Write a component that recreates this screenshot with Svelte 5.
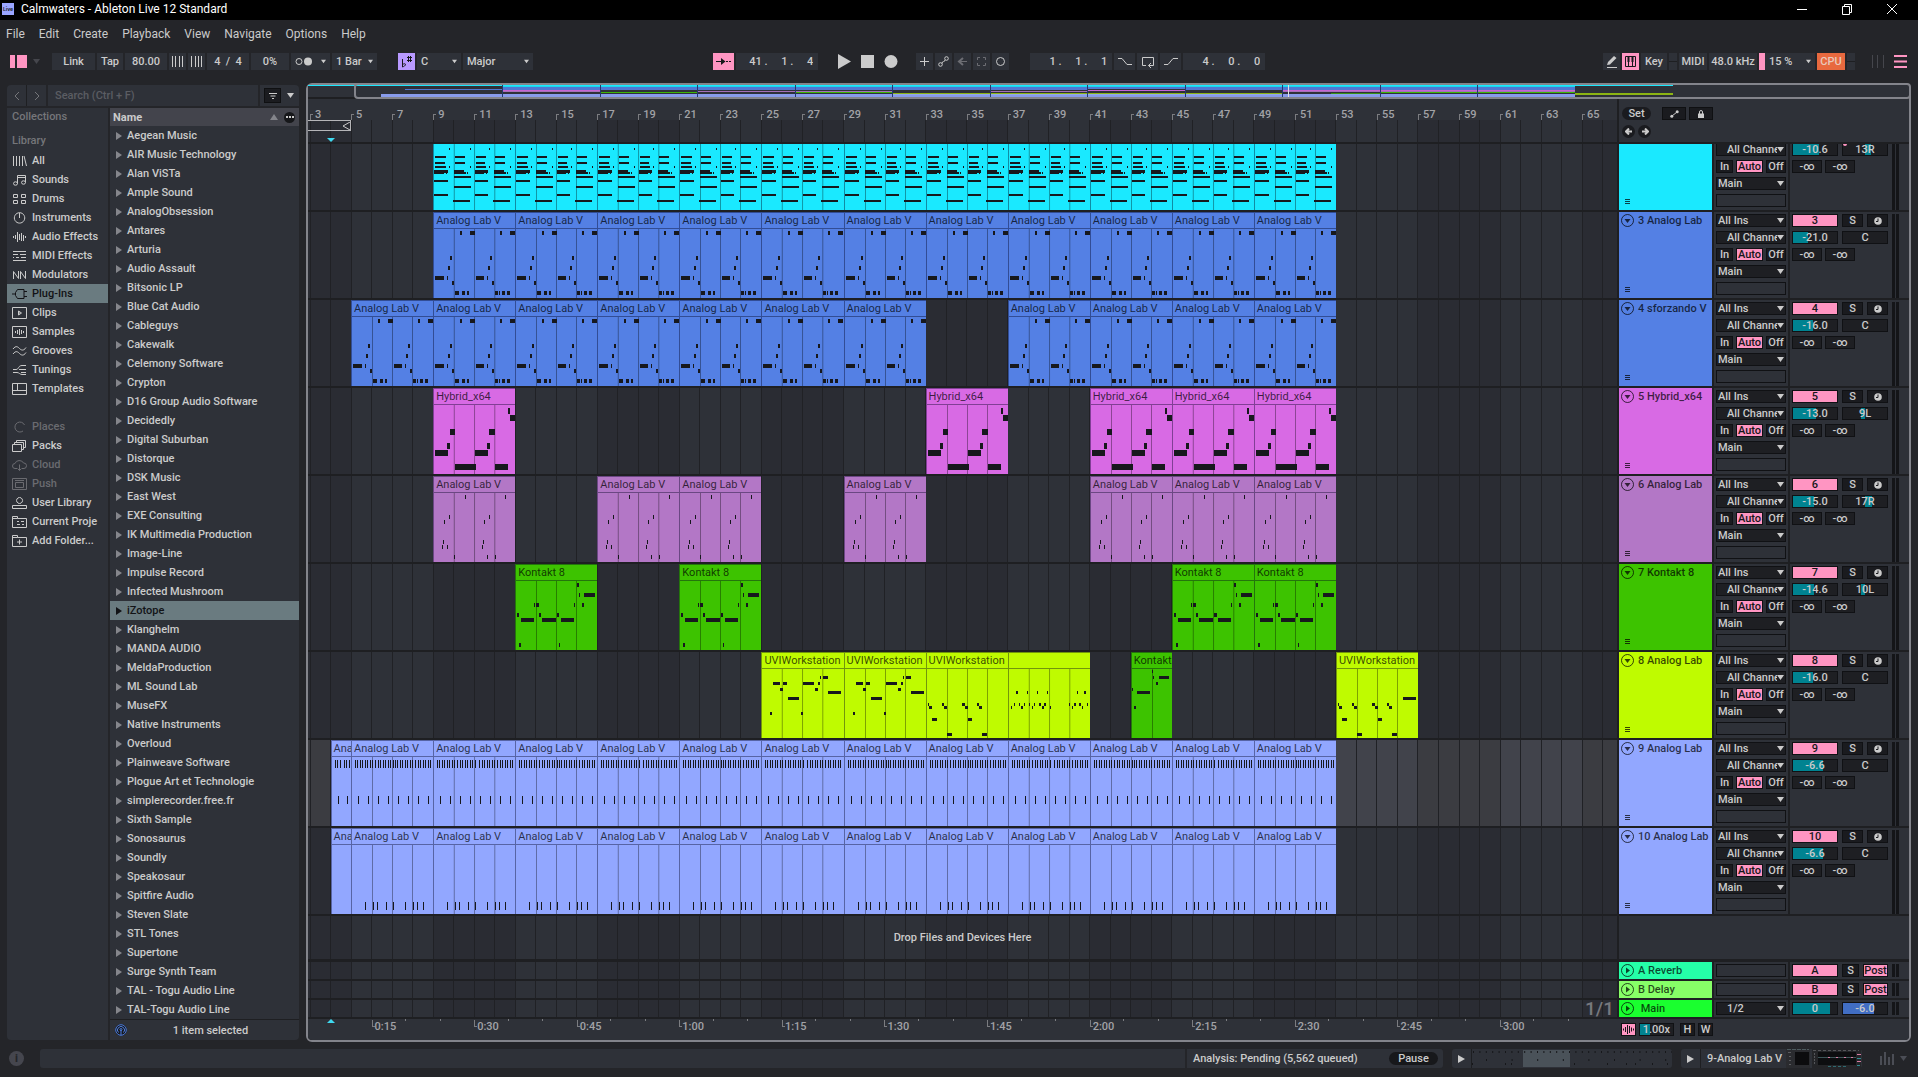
<script lang="ts">
	type Note = [x: number, y: number, w: number];
	type Pattern = { h: number; notes: Note[] };
	type Clip = { at: number; bars: number; name: string; pattern: string; color?: string };

	const FIRST_BAR = 2.9;
	const LAST_BAR = 66.7;
	const SPAN = LAST_BAR - FIRST_BAR;

	const menus = ['File', 'Edit', 'Create', 'Playback', 'View', 'Navigate', 'Options', 'Help'];

	const library = [
		{ label: 'All', icon: 'M1.5 1v10M4.5 1v10M7.5 1v10M10.5 1v10M12 1l2.5 10' },
		{ label: 'Sounds', icon: 'M5.5 9.5v-8h8v7M5.5 3.5h8M5.5 9.5a2 1.7 0 1 1-4 0a2 1.7 0 1 1 4 0M13.5 8.5a2 1.7 0 1 1-4 0a2 1.7 0 1 1 4 0' },
		{ label: 'Drums', icon: 'M1.5 1.5h4v3h-4zM9.5 1.5h4v3h-4zM1.5 7.5h4v3h-4zM9.5 7.5h4v3h-4z' },
		{ label: 'Instruments', icon: 'M7.5 .7v5.3M7.5 .7a5.2 5.2 0 1 0 .1 0' },
		{ label: 'Audio Effects', icon: 'M1.5 5v2M3.5 4v4M5.5 1v10M7.5 3v6M9.5 2v8M11.5 4v6M13.5 5v2' },
		{ label: 'MIDI Effects', icon: 'M1 1.5h13M1 10.5h13M1 4.5h5M8 4.5h6M4 7.5h3M9 7.5h5M1 7.5h1' },
		{ label: 'Modulators', icon: 'M1.5 10V2.5L6.5 9.5V2M8.5 10V2.5L13.5 9.5V2' },
		{ label: 'Plug-Ins', icon: 'M0 6h3.5M12 3.5h3M12 8.5h3M3.5 4.5l2-3h6.5v9h-6.5l-2-3z' },
		{ label: 'Clips', icon: 'M.5 .5h14v11h-14zM6.5 4v4l3-2zM7 5v2' },
		{ label: 'Samples', icon: 'M.5 .5h14v11h-14zM3.5 5v2M5.5 4v4M7.5 3v6M9.5 4v4M11.5 5v2' },
		{ label: 'Grooves', icon: 'M1 4c3-4 5-2 6.5-.5s4 3 6.5-1M1 9c3-4 5-2 6.5-.5s4 3 6.5-1' },
		{ label: 'Tunings', icon: 'M1 5.5h3c3 0 2-4 6-4h4M7 5.5h7M1 8.5h4c2 0 3 2 5 2h4M9 8.5h5' },
		{ label: 'Templates', icon: 'M.5 .5h14v11h-14zM.5 7.5h14M5.5 .5v7' }
	];

	const places = [
		{ label: 'Places', icon: 'M12.5 4a5 5 0 1 0-1.5 6', dim: true },
		{ label: 'Packs', icon: 'M.5 4.5h9v7h-9zM2.5 4.5v-2h9v7h-2M4.5 2.5v-2h9v7h-2' },
		{ label: 'Cloud', icon: 'M5 9.5h-2a2.5 2.5 0 0 1 0-5a4.5 4 0 0 1 8.5-.5a2.7 2.7 0 0 1 .5 5.5h-2M7.5 5.5v6M5.5 9.5l2 2l2-2', dim: true },
		{ label: 'Push', icon: 'M.5 .5h14v11h-14zM3.5 4.5h8v5h-8zM3 2.5h9', dim: true },
		{ label: 'User Library', icon: 'M7.5 .5a3 3 0 1 0 .1 0M.5 11.5v-3h14v3z' },
		{ label: 'Current Proje', icon: 'M.5 11.5v-11h5v2h9v9zM.5 2.5h5M5 5.5h2M9 5.5h3M5 8.5h3M10 8.5h2' },
		{ label: 'Add Folder...', icon: 'M.5 11.5v-11h5v2h9v9zM.5 2.5h5M7.5 4.5v5M5 7h5' }
	];

	const vendors = [
		'Aegean Music', 'AIR Music Technology', 'Alan ViSTa', 'Ample Sound', 'AnalogObsession',
		'Antares', 'Arturia', 'Audio Assault', 'Bitsonic LP', 'Blue Cat Audio', 'Cableguys',
		'Cakewalk', 'Celemony Software', 'Crypton', 'D16 Group Audio Software', 'Decidedly',
		'Digital Suburban', 'Distorque', 'DSK Music', 'East West', 'EXE Consulting',
		'IK Multimedia Production', 'Image-Line', 'Impulse Record', 'Infected Mushroom', 'iZotope',
		'Klanghelm', 'MANDA AUDIO', 'MeldaProduction', 'ML Sound Lab', 'MuseFX',
		'Native Instruments', 'Overloud', 'Plainweave Software', 'Plogue Art et Technologie',
		'simplerecorder.free.fr', 'Sixth Sample', 'Sonosaurus', 'Soundly', 'Speakosaur',
		'Spitfire Audio', 'Steven Slate', 'STL Tones', 'Supertone', 'Surge Synth Team',
		'TAL - Togu Audio Line', 'TAL-Togu Audio Line'
	];

	// Every pattern is drawn over four bars, 82 units wide
	const twice = (notes: Note[]): Note[] => [...notes, ...notes.map(([x, y, w]): Note => [x + 41, y, w])];

	const patterns: Record<string, Pattern> = {
		chords: {
			h: 2,
			notes: twice([
				[15, 4, 1], [1, 12, 11], [1, 18, 10], [1, 22, 11], [15, 22, 1], [0, 26, 14], [0, 27, 14],
				[0, 28, 10], [12, 28, 1], [0, 36, 14], [0, 50, 14],
				[36, 4, 1], [21, 12, 10], [21, 18, 10], [36, 22, 1], [20, 26, 10], [20, 28, 12], [33, 28, 1],
				[20, 32, 17], [20, 42, 17], [19, 56, 17]
			])
		},
		arp: {
			h: 4,
			notes: [
				...twice([[1, 47, 9], [13, 47, 1], [14, 37, 2], [16, 27, 2], [18, 52, 2], [26, 2, 2], [36, 2, 5]]),
				[21, 62, 4], [28, 62, 3], [33, 62, 2], [62, 62, 3], [66, 62, 1], [69, 62, 3], [74, 62, 3]
			]
		},
		hybrid: {
			h: 6,
			notes: [
				[75, 3, 2], [77, 10, 5], [16, 24, 5], [56, 24, 6], [13, 38, 3], [54, 38, 3], [1, 45, 13],
				[41, 45, 14], [21, 59, 21], [62, 59, 13]
			]
		},
		plucks: {
			h: 4,
			notes: [
				[31, 2, 1], [72, 2, 1], [15, 22, 1], [56, 22, 1], [10, 27, 1], [51, 27, 1], [9, 47, 1],
				[50, 47, 1], [8, 52, 1], [13, 52, 1], [49, 52, 1], [20, 62, 1], [54, 62, 1], [62, 62, 1]
			]
		},
		kontakt: {
			h: 4,
			notes: [
				[62, 2, 2], [64, 12, 1], [69, 12, 11], [18, 22, 1], [20, 22, 3], [59, 22, 1], [67, 22, 2],
				[1, 32, 2], [23, 32, 2], [41, 32, 3], [5, 37, 13], [26, 37, 14], [46, 37, 13], [3, 62, 2], [44, 62, 1]
			]
		},
		kontaktShort: {
			h: 3,
			notes: [[20, 1, 2], [22, 7, 1], [28, 7, 10], [25, 13, 2], [0, 19, 1], [5, 22, 13], [2, 37, 2]]
		},
		uviLead: {
			h: 3,
			notes: [
				[59, 7, 1], [62, 7, 5], [11, 13, 7], [21, 13, 4], [41, 13, 12], [57, 13, 2], [18, 19, 3],
				[54, 19, 3], [26, 28, 11], [67, 22, 13], [8, 43, 2], [39, 43, 2]
			]
		},
		uviBass: {
			h: 3,
			notes: [
				[1, 34, 1], [15, 34, 2], [35, 34, 3], [51, 34, 2], [2, 37, 3], [17, 37, 3], [38, 37, 3],
				[53, 37, 3], [5, 49, 5], [41, 49, 5], [20, 64, 5], [56, 64, 5]
			]
		},
		uviRun: {
			h: 3,
			notes: [
				[7, 22, 2], [18, 22, 1], [28, 22, 1], [38, 22, 1], [69, 22, 1], [76, 22, 2], [5, 34, 1],
				[10, 34, 1], [15, 34, 1], [20, 34, 1], [25, 34, 1], [30, 34, 2], [35, 34, 2], [61, 34, 1],
				[66, 34, 2], [71, 34, 2], [79, 34, 1], [2, 37, 1], [12, 37, 2], [23, 37, 1], [33, 37, 2],
				[41, 37, 1], [64, 37, 1], [74, 37, 1]
			]
		},
		hats: {
			h: 8,
			notes: [
				...Array.from({ length: 31 }, (_, i): Note => [Math.round((i + 1) * 2.56), 3, 1]),
				...[6, 16, 26, 36, 47, 57, 67, 77].map((x): Note => [x, 39, 1])
			]
		},
		kicks: {
			h: 8,
			notes: [13, 21, 25, 34, 41, 54, 62, 66, 72].map((x): Note => [x, 57, 1])
		},
		empty: { h: 1, notes: [] }
	};
	patterns.uviEnd = { h: 3, notes: [...patterns.uviBass.notes, [67, 28, 13]] };

	const clips = (name: string, pattern: string, starts: number[]): Clip[] =>
		starts.map((at) => ({ at, bars: 4, name, pattern }));

	const fromNine = [9, 13, 17, 21, 25, 29, 33, 37, 41, 45, 49];

	// mapY / mapH: the stripe each track gets in the overview
	const tracks = [
		{
			num: 2, name: '', color: '#1ae9ff', vol: '-10.6', fill: 58, pan: '13R', panAt: 13, mapY: 1, mapH: 1,
			clips: clips('', 'chords', fromNine)
		},
		{
			num: 3, name: '3 Analog Lab', color: '#5480e4', vol: '-21.0', fill: 34, pan: 'C', panAt: 0, mapY: 2, mapH: 2,
			clips: clips('Analog Lab V', 'arp', fromNine)
		},
		{
			num: 4, name: '4 sforzando V', color: '#5480e4', vol: '-16.0', fill: 45, pan: 'C', panAt: 0, mapY: 4, mapH: 1,
			clips: clips('Analog Lab V', 'arp', [5, 9, 13, 17, 21, 25, 29, 37, 41, 45, 49])
		},
		{
			num: 5, name: '5 Hybrid_x64', color: '#d86ae4', vol: '-13.0', fill: 53, pan: '9L', panAt: -9, mapY: 5, mapH: 1,
			clips: clips('Hybrid_x64', 'hybrid', [9, 33, 41, 45, 49])
		},
		{
			num: 6, name: '6 Analog Lab', color: '#b377c6', vol: '-15.0', fill: 47, pan: '17R', panAt: 17, mapY: 6, mapH: 1,
			clips: clips('Analog Lab V', 'plucks', [9, 17, 21, 29, 41, 45, 49])
		},
		{
			num: 7, name: '7 Kontakt 8', color: '#3dc300', vol: '-14.6', fill: 48, pan: '10L', panAt: -10, mapY: 7, mapH: 1,
			clips: clips('Kontakt 8', 'kontakt', [13, 21, 45, 49])
		},
		{
			num: 8, name: '8 Analog Lab', color: '#bffb00', vol: '-16.0', fill: 45, pan: 'C', panAt: 0, mapY: 8, mapH: 2,
			clips: [
				...clips('UVIWorkstation', 'uviLead', [25, 29]),
				...clips('UVIWorkstation', 'uviBass', [33]),
				...clips('', 'uviRun', [37]),
				{ at: 43, bars: 2, name: 'Kontakt 8', pattern: 'kontaktShort', color: '#3dc300' },
				...clips('UVIWorkstation', 'uviEnd', [53])
			]
		},
		{
			num: 9, name: '9 Analog Lab', color: '#92a7ff', vol: '-6.6', fill: 68, pan: 'C', panAt: 0, mapY: 9, mapH: 1,
			clips: [
				{ at: 4, bars: 1, name: 'Analog Lab V', pattern: 'hats' },
				...clips('Analog Lab V', 'hats', [5, ...fromNine])
			]
		},
		{
			num: 10, name: '10 Analog Lab', color: '#92a7ff', vol: '-6.6', fill: 68, pan: 'C', panAt: 0, mapY: 10, mapH: 2,
			clips: [
				{ at: 4, bars: 1, name: 'Analog Lab V', pattern: 'empty' },
				...clips('Analog Lab V', 'kicks', [5, ...fromNine])
			]
		}
	];

	const returns = [
		{ key: 'A', name: 'A Reverb', color: '#25ffa8' },
		{ key: 'B', name: 'B Delay', color: '#87ff67' }
	];

	const bars = Array.from({ length: 64 }, (_, i) => i + 3);
	const oddBars = bars.filter((b) => b % 2 === 1);
	const lightBars = [5, 13, 21, 29, 37, 45, 53, 61];
	const times = Array.from({ length: 12 }, (_, i) => {
		const s = (i + 1) * 15;
		return `${Math.floor(s / 60)}:${String(s % 60).padStart(2, '0')}`;
	});

	let selectedPlace = $state('Plug-Ins');
	let selectedVendor = $state('iZotope');
	let selectedTrack = $state(9);
	let search = $state('');

	const clipColor = (clip: Clip, color: string) => clip.color ?? color;
</script>

{#snippet caret()}
	<svg class="caret" viewBox="0 0 7 5" width="7" height="5"><path d="M0 0h7l-3.5 5z" /></svg>
{/snippet}

{#snippet barGrid()}
	<svg class="bar-grid" viewBox="0 0 {SPAN} 1" preserveAspectRatio="none" shape-rendering="crispEdges">
		{#each lightBars as b}
			<rect class="light" x={b - FIRST_BAR} y="0" width="4" height="1" />
		{/each}
		{#each bars as b}
			<line x1={b - FIRST_BAR} x2={b - FIRST_BAR} y1="0" y2="1" />
		{/each}
	</svg>
{/snippet}

{#snippet dropdown(label: string, value: string, cls: string)}
	<span class="dropdown {cls}">
		<select aria-label={label}><option>{value}</option></select>
		{@render caret()}
	</span>
{/snippet}

{#snippet meter()}
	<span class="meter"><i></i><i></i></span>
{/snippet}

<div class="app">
	<header class="titlebar">
		<span class="app-icon">Live</span>
		<span class="title">Calmwaters - Ableton Live 12 Standard</span>
		<div class="window-buttons">
			<button aria-label="Minimize"><svg viewBox="0 0 12 12" width="12" height="12"><path d="M1 6.5h10" /></svg></button>
			<button aria-label="Restore"><svg viewBox="0 0 12 12" width="12" height="12"><path d="M1.5 3.5h7v8h-7zM3.5 3.5v-2h7v8h-2" /></svg></button>
			<button aria-label="Close"><svg viewBox="0 0 12 12" width="12" height="12"><path d="M1 1l10 10M11 1l-10 10" /></svg></button>
		</div>
	</header>

	<nav class="menubar">
		{#each menus as menu}
			<button>{menu}</button>
		{/each}
	</nav>

	<div class="toolbar">
		<button class="browser-toggle" aria-label="Toggle browser"><i></i><i></i></button>
		<button class="toggle-caret" aria-label="Browser options">{@render caret()}</button>

		<div class="group">
			<button class="w43">Link</button>
			<button class="w26">Tap</button>
			<input class="w42" aria-label="Tempo" value="80.00" />
			<button class="w17" aria-label="Nudge down"><svg viewBox="0 0 13 11" width="13" height="11"><path d="M1.5 0v11M4.5 0v11M8.5 0v11M11.5 0v11" /></svg></button>
			<button class="w17" aria-label="Nudge up"><svg viewBox="0 0 13 11" width="13" height="11"><path d="M1.5 0v11M5.5 0v11M8.5 0v11M11.5 0v11" /></svg></button>
			<input class="w42" aria-label="Time signature" value="4  /  4" />
			<input class="w38" aria-label="Groove amount" value="0%" />
			<button class="w39 metronome" aria-label="Metronome">
				<svg viewBox="0 0 18 9" width="18" height="9"><circle cx="4" cy="4.5" r="3" /><circle class="solid" cx="13" cy="4.5" r="4" /></svg>
				{@render caret()}
			</button>
			{@render dropdown('Quantization', '1 Bar', 'w45')}
		</div>

		<div class="group scale">
			<button class="w17 violet" aria-label="Scale mode"><svg viewBox="0 0 12 12" width="12" height="12"><path d="M1.5 3v8c1.5-.5 3-1.500 3-2.500s-1.500-1-3 0M7.500 0v6M9.500 0v6M6 1.500h5M6 4.500h5" /></svg></button>
			{@render dropdown('Root note', 'C', 'w44')}
			{@render dropdown('Scale name', 'Major', 'w70')}
		</div>

		<div class="space-a"></div>

		<div class="group">
			<button class="w21 pink" aria-label="Follow"><svg viewBox="0 0 16 9" width="16" height="9"><path d="M0 4.5h9M10 4.5h2M13 4.5h2" /><path class="solid" d="M5 1l4.5 3.5l-4.5 3.5z" /></svg></button>
			<input class="w82 position" aria-label="Song position" value="41 .     1 .     4" />
		</div>

		<div class="transport">
			<button aria-label="Play"><svg viewBox="0 0 14 15" width="14" height="15"><path class="solid" d="M0 0l13 7.5l-13 7.5z" /></svg></button>
			<button aria-label="Stop"><svg viewBox="0 0 14 13" width="14" height="13"><path class="solid" d="M0 0h13v13h-13z" /></svg></button>
			<button aria-label="Record"><svg viewBox="0 0 14 13" width="14" height="13"><circle class="solid" cx="7" cy="6.5" r="6.5" /></svg></button>
		</div>

		<div class="group">
			<button class="w17" aria-label="Overdub"><svg viewBox="0 0 11 11" width="11" height="11"><path d="M1 5.5h9M5.5 1v9" /></svg></button>
			<button class="w17" aria-label="Automation arm"><svg viewBox="0 0 11 11" width="11" height="11"><circle cx="2.5" cy="8.5" r="1.8" /><circle cx="8.5" cy="2.5" r="1.8" /><path d="M4 7.5c0-3 3-1 3-3.5" /></svg></button>
			<button class="w17 dim" aria-label="Re-enable automation"><svg viewBox="0 0 11 11" width="11" height="11"><path d="M2 5.5h8" /><path class="thick" d="M6 2l-4 3.5l4 3.5" /></svg></button>
			<button class="w17 dim" aria-label="Capture"><svg viewBox="0 0 11 11" width="11" height="11"><path d="M1.5 4v-2.5h2.5M7 1.5h2.5v2.5M9.5 7v2.5h-2.5M4 9.5h-2.5v-2.5" /></svg></button>
			<button class="w17" aria-label="Session record"><svg viewBox="0 0 11 11" width="11" height="11"><circle cx="5.5" cy="5.5" r="4" /></svg></button>
		</div>

		<div class="group loop-group">
			<input class="w82 position" aria-label="Loop start" value="1 .     1 .     1" />
			<button class="w21" aria-label="Punch in"><svg viewBox="0 0 14 9" width="14" height="9"><path d="M0 1.5h4l5 6h5" /></svg></button>
			<button class="w21" aria-label="Loop"><svg viewBox="0 0 14 12" width="14" height="12"><path d="M5 9.5h-3.5v-8h11v8h-5M10 7l-2.5 2.5l2.5 2.5" /></svg></button>
			<button class="w21" aria-label="Punch out"><svg viewBox="0 0 14 9" width="14" height="9"><path d="M0 7.5h4l5-6h5" /></svg></button>
			<input class="w82 position" aria-label="Loop length" value="4 .     0 .     0" />
		</div>

		<div class="space-b"></div>

		<div class="group">
			<button class="w17" aria-label="Draw mode"><svg viewBox="0 0 12 13" width="12" height="13"><path class="solid" d="M1 10l1-3l6-6l2.5 2l-6.5 6.5z" /><path d="M1 12.5h10" /></svg></button>
			<button class="w17 pink" aria-label="Computer keyboard"><svg viewBox="0 0 11 11" width="11" height="11"><path d="M.5 .5h10v10h-10zM3.5 6v5M7.5 6v5" /><path class="solid" d="M2.5 0h2v6h-2zM6.5 0h2v6h-2z" /></svg></button>
			<button class="w26">Key</button>
			<span class="w8 light-strip"></span>
			<button class="w28">MIDI</button>
			<button class="w48">48.0 kHz</button>
			{@render dropdown('CPU load', '15 %', 'w56 load')}
			<button class="w28 cpu">CPU</button>
			<span class="w8 light-strip"></span>
		</div>
		<div class="view-toggles">
			<button class="faint" aria-label="Session view"><svg viewBox="0 0 14 13" width="14" height="13"><path d="M1.5 0v13M6.5 0v13M12.5 0v13" /></svg></button>
			<button class="rose" aria-label="Arrangement view"><svg viewBox="0 0 13 13" width="13" height="13"><path class="thick" d="M0 1h13M0 6.5h13M0 12h13" /></svg></button>
		</div>
	</div>

	<main class="workspace">
		<aside class="browser">
			<div class="search-row">
				<div class="history">
					<button aria-label="Back"><svg viewBox="0 0 6 8" width="6" height="8"><path d="M5 0l-4 4l4 4" /></svg></button>
					<button aria-label="Forward"><svg viewBox="0 0 6 8" width="6" height="8"><path d="M1 0l4 4l-4 4" /></svg></button>
				</div>
				<input aria-label="Search" placeholder="Search (Ctrl + F)" bind:value={search} />
				<div class="filters">
					<button class="filter" aria-label="Filter"><svg viewBox="0 0 8 6" width="8" height="6"><path d="M0 .5h8M1.5 3h5M3 5.5h2" /></svg></button>
					<button aria-label="Filter options">{@render caret()}</button>
				</div>
			</div>

			<div class="columns">
				<div class="sidebar">
					<h2>Collections</h2>
					<h2 class="second">Library</h2>
					{#each library as item}
						<button class:selected={item.label === selectedPlace} onclick={() => (selectedPlace = item.label)}>
							<svg viewBox="0 0 15 12" width="15" height="12"><path d={item.icon} /></svg>{item.label}
						</button>
					{/each}
					<div class="blank"></div>
					{#each places as item}
						<button class:faded={item.dim} class:selected={item.label === selectedPlace} onclick={() => (selectedPlace = item.label)}>
							<svg viewBox="0 0 15 12" width="15" height="12"><path d={item.icon} /></svg>{item.label}
						</button>
					{/each}
				</div>

				<div class="results">
					<div class="results-head">
						<span>Name</span>
						<svg viewBox="0 0 8 6" width="8" height="6"><path class="solid" d="M0 6h8l-4-6z" /></svg>
						<button aria-label="Columns"><i></i><i></i><i></i></button>
					</div>
					<ul>
						{#each vendors as vendor}
							<li>
								<button class:selected={vendor === selectedVendor} onclick={() => (selectedVendor = vendor)}>
									<svg viewBox="0 0 6 8" width="6" height="8"><path d="M0 0v8l6-4z" /></svg>{vendor}
								</button>
							</li>
						{/each}
					</ul>
					<div class="results-foot">
						<button aria-label="Preview"><svg viewBox="0 0 12 12" width="12" height="12"><circle cx="6" cy="6" r="5.3" /><path d="M3.5 8.5a3.5 3.5 0 1 1 5 0M6 6v5" /><circle cx="6" cy="5.5" r="1" /></svg></button>
						<span>1 item selected</span>
					</div>
				</div>
			</div>
		</aside>

		<section class="arrangement">
			<div class="overview">
				<svg viewBox="0 0 {LAST_BAR - 1} 12" preserveAspectRatio="none" shape-rendering="crispEdges">
					<rect x="0" y="0" width="56" height="1" fill="#1ae9ff" />
					{#each tracks as track}
						{#each track.clips as clip}
							<rect x={clip.at - 1} y={track.mapY} width={clip.bars} height={track.mapH} fill={clipColor(clip, track.color)} opacity={track.num === 8 ? 0.65 : 0.9} />
						{/each}
					{/each}
					{#each fromNine as b}
						<line x1={b - 1} x2={b - 1} y1="0" y2="12" />
					{/each}
					<line class="playhead" x1="40.25" x2="40.25" y1="0" y2="12" />
				</svg>
				<div class="overview-window"></div>
			</div>

			<div class="row ruler-row">
				<div class="rulers">
					<div class="timeline beat-ruler">
						{#each oddBars as b}
							<span class="beat" style:grid-column="{b - 1} / span 2"><i></i>{b}</span>
						{/each}
					</div>
					<div class="timeline scrub">
						{@render barGrid()}
						<div class="loop-brace"><svg viewBox="0 0 8 8" width="8" height="8"><path d="M8 0l-7 4l7 4" /></svg></div>
						<svg class="locator" viewBox="0 0 8 4" width="8" height="4"><path d="M0 0h8l-4 4z" /></svg>
					</div>
				</div>
				<div class="set-controls">
					<div>
						<button class="set">Set</button>
						<button class="tool" aria-label="Automation mode"><svg viewBox="0 0 9 8" width="9" height="8"><path d="M2 6l5-4" /><circle class="solid" cx="1.8" cy="6.2" r="1.5" /><circle class="solid" cx="7.2" cy="1.8" r="1.5" /></svg></button>
						<button class="tool" aria-label="Lock envelopes"><svg viewBox="0 0 8 8" width="8" height="8"><path class="solid" d="M1 3.5h6v4.5h-6z" /><path d="M2.5 4v-2a1.5 1.5 0 0 1 3 0v2" /></svg></button>
					</div>
					<div>
						<button class="round" aria-label="Previous locator"><svg viewBox="0 0 8 7" width="8" height="7"><path class="thick" d="M1 3.5h6M4 .5l-3 3l3 3" /></svg></button>
						<button class="round" aria-label="Next locator"><svg viewBox="0 0 8 7" width="8" height="7"><path class="thick" d="M1 3.5h6M4 .5l3 3l-3 3" /></svg></button>
					</div>
				</div>
			</div>

			{#each tracks as track, index}
				<div class="row track" class:cut={index === 0} class:current={track.num === selectedTrack}>
					<div class="timeline lane">
						{@render barGrid()}
						{#each track.clips as clip}
							<div class="clip" style:grid-column="{clip.at - 1} / span {clip.bars}" style:background={clipColor(clip, track.color)}>
								<div class="clip-name">{clip.name}</div>
								<svg viewBox="0 0 {clip.bars * 20.5} 69" preserveAspectRatio="none" shape-rendering="crispEdges">
									{#each Array(clip.bars - 1) as _, i}
										<line x1={(i + 1) * 20.5} x2={(i + 1) * 20.5} y1="0" y2="69" />
									{/each}
									{#each patterns[clip.pattern].notes as [x, y, w]}
										<rect {x} y={index === 0 ? y + 3 : y} width={w} height={patterns[clip.pattern].h} />
									{/each}
								</svg>
							</div>
						{/each}
					</div>
					<div class="head" style:background={track.color}>
						<div class="head-top">
							<button aria-label="Unfold track"><svg viewBox="0 0 13 13" width="13" height="13"><circle cx="6.5" cy="6.5" r="6" /><path class="solid" d="M3.5 5h6l-3 4z" /></svg></button>
							<button class="head-name" onclick={() => (selectedTrack = track.num)}>{track.name}</button>
						</div>
						<svg class="handle" viewBox="0 0 5 5" width="5" height="5"><path d="M0 .5h5M0 2.5h5M0 4.5h5" /></svg>
					</div>
					<div class="io">
						{@render dropdown('Input type', 'All Ins', 'box')}
						{@render dropdown('Input channel', 'All Channels', 'box indent')}
						<div class="monitor">
							<button>In</button><button class="pink">Auto</button><button>Off</button>
						</div>
						{@render dropdown('Output type', 'Main', 'box')}
						<div class="slot"></div>
					</div>
					<div class="mixer">
						<div class="mix-controls">
							<div>
								<button class="pink activator">{track.num}</button>
								<button class="solo">S</button>
								<button class="solo" aria-label="Arm"><svg viewBox="0 0 8 8" width="8" height="8"><circle class="solid" cx="4" cy="4" r="3.8" /><path class="notch" d="M4 1.5v3h-2" /></svg></button>
							</div>
							<div>
								<input aria-label="Volume" value={track.vol} style:--from="0%" style:--to="{track.fill}%" />
								<span class="pan">
									<input aria-label="Pan" value={track.pan} style:--from="{50 + Math.min(track.panAt, 0)}%" style:--to="{50 + Math.max(track.panAt, 0)}%" />
									{#if index === 0}<i class="automated"></i>{/if}
								</span>
							</div>
							<div class="sends">
								<input aria-label="Send A" value="-∞" />
								<input aria-label="Send B" value="-∞" />
							</div>
						</div>
						{@render meter()}
					</div>
				</div>
			{/each}

			<div class="row drop">
				<div class="timeline lane">
					{@render barGrid()}
					<span class="drop-hint">Drop Files and Devices Here</span>
				</div>
				<div></div>
			</div>

			{#each returns as ret}
				<div class="row return">
					<div class="timeline lane">{@render barGrid()}</div>
					<div class="head" style:background={ret.color}>
						<div class="head-top">
							<button aria-label="Unfold return"><svg viewBox="0 0 13 13" width="13" height="13"><circle cx="6.5" cy="6.5" r="6" /><path class="solid" d="M5 3.5v6l4-3z" /></svg></button>
							<button class="head-name">{ret.name}</button>
						</div>
					</div>
					<div class="io"><div class="slot"></div></div>
					<div class="mixer">
						<div class="mix-controls">
							<div>
								<button class="pink activator">{ret.key}</button>
								<button class="solo narrow">S</button>
								<button class="pink post">Post</button>
							</div>
						</div>
						{@render meter()}
					</div>
				</div>
			{/each}

			<div class="row return">
				<div class="timeline lane">
					{@render barGrid()}
					<span class="zoom-ratio">1/1</span>
				</div>
				<div class="head main-head">
					<div class="head-top">
						<button aria-label="Unfold main"><svg viewBox="0 0 13 13" width="13" height="13"><circle cx="6.5" cy="6.5" r="6" /><path class="solid" d="M5 3.5v6l4-3z" /></svg></button>
						<button class="head-name">&nbsp;Main</button>
					</div>
				</div>
				<div class="io">{@render dropdown('Main output', '1/2', 'box indent')}</div>
				<div class="mixer">
					<div class="mix-controls">
						<div>
							<input aria-label="Main volume" value="0" style:--from="0%" style:--to="84%" />
							<input class="cue" aria-label="Cue volume" value="-6.0" style:--from="0%" style:--to="71%" />
						</div>
					</div>
					{@render meter()}
				</div>
			</div>

			<div class="row foot-row">
				<div class="time-ruler">
					<span class="lead"><svg class="locator" viewBox="0 0 8 4" width="8" height="4"><path d="M0 4h8l-4-4z" /></svg></span>
					{#each times as t}
						<span class="time"><i></i>{t}</span>
					{/each}
					<span class="tail"></span>
				</div>
				<div class="foot-controls">
					<button class="pink wave" aria-label="Automation fades"><svg viewBox="0 0 11 9" width="11" height="9"><path d="M.5 3.5v2M2.5 2v5M4.5 0v9M6.5 1v7M8.5 2.5v4M10.5 3.5v2" /></svg></button>
					<input aria-label="Zoom" value="1.00x" style:--from="0%" style:--to="30%" />
					<button class="letter h">H</button>
					<button class="letter">W</button>
				</div>
			</div>
		</section>
	</main>

	<footer class="statusbar">
		<span class="info">i</span>
		<div class="status-text"></div>
		<div class="analysis">
			<span>Analysis: Pending (5,562 queued)</span>
			<button>Pause</button>
		</div>
		<div class="clip-strip">
			<button aria-label="Show clip view"><svg viewBox="0 0 7 8" width="7" height="8"><path class="solid" d="M0 0v8l7-4z" /></svg></button>
			<svg class="clip-map" viewBox="0 0 200 19" preserveAspectRatio="none">
				<rect class="view" x="51" y="1" width="47" height="17" />
				{#each Array(32) as _, i}
					<rect x={1 + i * 6.4} y="2" width="1" height="2" />
				{/each}
				{#each Array(8) as _, i}
					<rect x={14 + i * 25.6} y="10" width="1" height="2" />
				{/each}
				{#each [0, 33, 39, 102, 135, 154, 163, 180, 195] as x}
					<rect {x} y="14" width="1" height="2" />
				{/each}
			</svg>
		</div>
		<div class="device-strip">
			<button aria-label="Show device view"><svg viewBox="0 0 7 8" width="7" height="8"><path class="solid" d="M0 0v8l7-4z" /></svg></button>
			<span>9-Analog Lab V</span>
			<svg viewBox="0 0 76 19" width="76" height="19">
				<rect x="0" y="0" width="24" height="19" fill="#2a2b2f" />
				<rect x="9" y="3" width="14" height="13" fill="#0c0c0e" />
				<path d="M2 3.5h3M3 7.5h2M3 11.5h2M3 15.5h2" stroke="#5b5c60" />
				<path d="M1 .5h22" stroke="#4d5a5e" stroke-dasharray="4 1" />
				<rect x="26" y="0" width="49" height="19" fill="#242528" />
				<rect x="32" y="3" width="38" height="13" fill="#0d0e10" />
				<path d="M27 1.5h46" stroke="#55565a" stroke-dasharray="3 2" />
				<path d="M28.5 4v12" stroke="#55565a" stroke-dasharray="2 1" />
				<path d="M32 8.5h38" stroke="#3d5558" />
				<path d="M42 8.5h2M50 8.5h2M58 8.5h2M65 8.5h2" stroke="#d87ba2" />
				<path d="M42 17.5h20" stroke="#2f6a70" stroke-dasharray="3 2" />
				<path d="M71 5.5h4M71 12.5h4" stroke="#d87ba2" />
				<path d="M71 9.5h4M71 16.5h3" stroke="#2f8a90" />
			</svg>
		</div>
		<svg class="levels" viewBox="0 0 14 13" width="14" height="13"><path class="thick" d="M1 4v9M5 0v13M9 5v8M13 2v11" /></svg>
		<svg class="levels-caret" viewBox="0 0 7 5" width="7" height="5"><path d="M0 0h7l-3.5 5z" /></svg>
	</footer>
</div>

<style>
	:global(body) {
		background: #242529;
	}

	.app {
		--panel: #2e3138;
		--edge: #1e1f22;
		--text: #cbcbcb;
		--muted: #75767a;
		--pink: #ff95c2;
		--frame: #83848b;

		display: flex;
		flex-direction: column;
		min-height: 100vh;
		box-sizing: border-box;
		background: #242529;
		color: var(--text);
		font: 500 11px/13px Roboto, "Liberation Sans", sans-serif;
		cursor: default;
	}

	.app :where(button, input, select) {
		box-sizing: border-box;
		min-width: 0;
		margin: 0;
		padding: 0;
		border: 0;
		border-radius: 0;
		background: none;
		color: inherit;
		font: inherit;
	}

	button {
		display: flex;
		align-items: center;
		justify-content: center;
		white-space: nowrap;
	}

	svg {
		display: block;
		flex: none;
		fill: none;
		stroke: currentColor;
	}

	.solid,
	.caret path {
		fill: currentColor;
		stroke: none;
	}

	.thick {
		stroke-width: 2;
	}

	/* Window chrome */

	.titlebar {
		display: flex;
		align-items: center;
		height: 20px;
		padding: 0 4px 3px 2px;
		box-sizing: border-box;
		background: #000;
		color: #fff;
		font: 12px/16px Roboto, "Noto Sans", sans-serif;
	}

	.app-icon {
		width: 12px;
		height: 12px;
		margin-right: 7px;
		background: #9aa5ff;
		color: #22242c;
		font: 700 5px/12px Inter, sans-serif;
		text-align: center;
	}

	.window-buttons {
		display: flex;
		margin-left: auto;
	}

	.window-buttons button {
		width: 45px;
	}

	.menubar {
		display: flex;
		gap: 14px;
		height: 28px;
		padding: 0 6px;
		font: 12px/28px Roboto, "Noto Sans", sans-serif;
	}

	/* Toolbar */

	.toolbar {
		display: flex;
		align-items: center;
		height: 17px;
		padding: 5px 11px 13px 10px;
	}

	.group {
		display: flex;
		gap: 2px;
	}

	.group > * {
		height: 17px;
		background: var(--panel);
		text-align: center;
	}

	.w8 { width: 8px; }
	.w17 { width: 17px; }
	.w21 { width: 21px; }
	.w26 { width: 26px; }
	.w28 { width: 28px; }
	.w38 { width: 38px; }
	.w39 { width: 39px; }
	.w42 { width: 42px; }
	.w43 { width: 43px; }
	.w44 { width: 44px; }
	.w45 { width: 45px; }
	.w48 { width: 48px; }
	.w56 { width: 56px; }
	.w70 { width: 70px; }
	.w82 { width: 82px; }

	.browser-toggle {
		gap: 2px;
	}

	.browser-toggle i {
		width: 5px;
		height: 13px;
		background: var(--pink);
	}

	.browser-toggle i + i {
		width: 10px;
	}

	.toggle-caret {
		width: 19px;
		margin-right: 6px;
		color: #45464c;
	}

	.metronome {
		gap: 8px;
	}

	.metronome .caret {
		width: 5px;
	}

	.scale {
		margin-left: 21px;
	}

	.group > .violet {
		background: #b899ff;
		color: #16171a;
	}

	.app .pink {
		background: var(--pink);
		color: #16171a;
	}

	.space-a { flex: 8; }
	.space-b { flex: 15; }

	.group > .position {
		padding-right: 5px;
		text-align: right;
		white-space: pre;
	}

	.transport {
		display: flex;
		gap: 9px;
		margin: 0 18px 0 20px;
	}

	.loop-group {
		margin-left: 21px;
	}

	.dim {
		color: #6c6d73;
	}

	.faint {
		color: #45464c;
	}

	.rose {
		color: var(--pink);
	}

	.group > .cpu {
		background: #e8693f;
		color: #e8c9bd;
	}

	.group > .load {
		border-left: 6px solid var(--pink);
		box-sizing: border-box;
	}

	.group > .light-strip {
		background: linear-gradient(var(--edge), var(--edge)) center / 100% 1px no-repeat, var(--panel);
	}

	.view-toggles {
		display: flex;
		gap: 9px;
		margin-left: 16px;
	}

	.dropdown {
		display: grid;
		align-items: center;
	}

	.dropdown > * {
		grid-area: 1 / 1;
	}

	.dropdown select {
		width: 100%;
		padding: 0 14px 0 4px;
		appearance: none;
		overflow: hidden;
	}

	.dropdown .caret {
		justify-self: end;
		width: 5px;
		margin-right: 4px;
		pointer-events: none;
	}

	/* Browser */

	.workspace {
		display: flex;
		flex: 1;
		gap: 7px;
		padding: 0 7px;
	}

	.browser {
		display: flex;
		flex-direction: column;
		flex: none;
		gap: 2px;
		width: 292px;
		margin: 2px 0;
	}

	.search-row {
		display: flex;
		gap: 2px;
		height: 21px;
	}

	.history {
		display: flex;
		width: 39px;
		background: var(--panel);
		border-radius: 4px 0 0 0;
		color: var(--muted);
	}

	.history button {
		flex: 1;
	}

	.history button + button {
		border-left: 1px solid var(--edge);
	}

	.search-row input {
		flex: 1;
		padding: 0 7px;
		background: var(--panel);
	}

	.search-row input::placeholder {
		color: #5b5d63;
		opacity: 1;
	}

	.filters {
		display: flex;
		align-items: center;
		gap: 6px;
		width: 39px;
		padding-left: 4px;
		box-sizing: border-box;
		background: var(--panel);
		border-radius: 0 4px 0 0;
	}

	.filter {
		width: 17px;
		height: 15px;
		border: 1px solid #0f1012;
		background: #1b1c20;
	}

	.columns {
		display: flex;
		flex: 1;
		gap: 2px;
	}

	.sidebar {
		width: 101px;
		background: var(--panel);
		border-radius: 0 0 0 4px;
		overflow: hidden;
	}

	.sidebar h2 {
		height: 19px;
		margin: 0;
		padding-left: 5px;
		color: var(--muted);
		font: inherit;
		line-height: 18px;
	}

	.sidebar .second {
		margin-top: 5px;
	}

	.sidebar button {
		gap: 5px;
		justify-content: flex-start;
		width: 100%;
		height: 19px;
		padding-left: 5px;
	}

	.sidebar .blank {
		height: 19px;
	}

	.sidebar .faded {
		color: #6a6b70;
	}

	.sidebar .selected {
		background: #6a7b80;
		color: #121316;
	}

	.results {
		display: flex;
		flex: 1;
		flex-direction: column;
		background: var(--panel);
		border-radius: 0 0 4px 0;
	}

	.results-head {
		display: flex;
		align-items: center;
		gap: 6px;
		height: 18px;
		padding: 0 4px 0 3px;
		background: #43444c;
	}

	.results-head span {
		flex: 1;
		font-weight: 700;
	}

	.results-head svg {
		color: #84858b;
	}

	.results-head button {
		gap: 1px;
		width: 11px;
		height: 11px;
		border-radius: 50%;
		background: #16171a;
	}

	.results-head i {
		width: 2px;
		height: 2px;
		background: var(--text);
	}

	.results ul {
		flex: 1 1 0px;
		margin: 0;
		padding: 0;
		overflow: hidden;
		list-style: none;
	}

	.results li button {
		gap: 5px;
		justify-content: flex-start;
		width: 100%;
		height: 19px;
		padding-left: 6px;
	}

	li svg {
		color: #85868c;
	}

	li path {
		fill: currentColor;
		stroke: none;
	}

	.results li .selected {
		background: #6a7b80;
		color: #121316;
	}

	li .selected svg {
		color: #121316;
	}

	.results-foot {
		display: flex;
		align-items: center;
		height: 21px;
		box-sizing: border-box;
		padding: 0 5px;
		border-top: 1px solid var(--edge);
	}

	.results-foot button {
		border-radius: 50%;
		background: #16171a;
		color: #4f7fe0;
	}

	.results-foot span {
		flex: 1;
		text-align: center;
	}

	/* Arrangement */

	.arrangement {
		display: flex;
		flex: 1;
		flex-direction: column;
		gap: 2px;
		min-width: 0;
		box-sizing: border-box;
		border: 2px solid var(--frame);
		border-radius: 6px;
		background: var(--edge);
	}

	.overview {
		display: grid;
		height: 14px;
		margin-bottom: -2px;
	}

	.overview > * {
		grid-area: 1 / 1;
		min-width: 0;
	}

	.overview > svg {
		width: 100%;
		height: 12px;
		background: var(--panel);
		stroke: none;
	}

	.overview line {
		stroke: #223a6e;
		stroke-width: 1px;
		vector-effect: non-scaling-stroke;
	}

	.overview .playhead {
		stroke: #e0e0e0;
	}

	.overview-window {
		margin: -2px -2px 0 2.86%;
		border: 2px solid var(--frame);
		border-radius: 4px;
	}

	.row {
		display: grid;
		grid-template-rows: minmax(0, 1fr);
		grid-template-columns: minmax(0, 1fr) 93px 74px 119px;
		gap: 2px;
	}

	.row > * {
		min-width: 0;
		background: var(--panel);
	}

	.timeline {
		display: grid;
		grid-template-columns: 0.1fr repeat(63, minmax(0, 1fr)) 0.7fr;
		grid-template-rows: minmax(0, 1fr);
		min-width: 0;
		overflow: hidden;
	}

	.bar-grid {
		grid-area: 1 / 1 / 2 / -1;
		width: 100%;
		height: 100%;
		background: #2a2c33;
	}

	.bar-grid .light {
		fill: #2e3138;
		stroke: none;
	}

	.bar-grid line {
		stroke: #202125;
		vector-effect: non-scaling-stroke;
	}

	.current .bar-grid {
		background: #3b3c41;
	}

	.current .bar-grid .light {
		fill: #41434b;
	}

	.ruler-row {
		height: 43px;
		grid-template-columns: minmax(0, 1fr) 290px;
	}

	.beat-ruler {
		height: 21px;
		color: #a2a3a7;
	}

	.beat {
		display: flex;
		grid-row: 1;
		align-items: flex-end;
		gap: 2px;
		min-width: 0;
		line-height: 11px;
	}

	.beat i {
		width: 2px;
		height: 5px;
		border: solid #7b7c80;
		border-width: 1px 0 0 1px;
	}

	.scrub {
		height: 22px;
	}

	.loop-brace {
		display: flex;
		grid-area: 1 / 1 / 2 / 4;
		align-items: center;
		justify-content: flex-end;
		height: 9px;
		border: solid #b5b5b8;
		border-width: 1px 1px 1px 0;
	}

	.locator {
		fill: #3fd9f0;
		stroke: none;
	}

	.scrub .locator {
		grid-area: 1 / 3;
		align-self: end;
		margin-left: -4px;
	}

	.set-controls {
		display: flex;
		flex-direction: column;
		gap: 5px;
		padding: 8px 3px 0;
	}

	.set-controls > div {
		display: flex;
		gap: 3px;
	}

	.set-controls button {
		height: 13px;
		background: #1a1b1f;
	}

	.set-controls .set {
		width: 29px;
		margin-right: 8px;
		border-radius: 7px;
	}

	.set-controls .tool {
		width: 24px;
		border: 1px solid #0f1012;
	}

	.set-controls .round {
		width: 13px;
		border-radius: 50%;
	}

	.track {
		flex: none;
		height: 86px;
	}

	.cut {
		grid-template-rows: 86px;
		align-content: end;
		height: 66px;
		overflow: hidden;
	}

	.clip {
		display: flex;
		flex-direction: column;
		grid-row: 1;
		box-sizing: border-box;
		min-width: 0;
		border: solid rgb(0 0 30 / 0.4);
		border-width: 1px 0 0 1px;
		color: rgb(0 0 0 / 0.72);
		overflow: hidden;
	}

	.clip-name {
		flex: none;
		height: 15px;
		padding-left: 2px;
		border-bottom: 1px solid rgb(0 0 30 / 0.4);
		font-weight: 400;
		line-height: 16px;
		white-space: nowrap;
		overflow: hidden;
	}

	.clip > svg {
		width: 100%;
		height: 69px;
	}

	.clip rect {
		fill: #17181d;
		stroke: none;
	}

	.clip line {
		stroke: rgb(0 0 0 / 0.35);
		vector-effect: non-scaling-stroke;
	}

	.head {
		display: flex;
		flex-direction: column;
		justify-content: space-between;
		padding: 2px;
		color: rgb(0 0 0 / 0.72);
		overflow: hidden;
	}

	.head-top {
		display: flex;
		gap: 4px;
	}

	.main-head {
		background: #1aff2f;
	}

	.handle {
		margin: 0 0 4px 4px;
	}

	.io {
		display: flex;
		flex-direction: column;
		gap: 4px;
		padding: 2px;
	}

	.box,
	.slot {
		box-sizing: border-box;
		height: 13px;
		border: 1px solid #101114;
	}

	.box {
		background: #1e1f23;
	}

	.box select {
		height: 11px;
		padding: 0 8px 0 1px;
		line-height: 11px;
	}

	.indent select {
		padding-left: 10px;
	}

	.box .caret {
		width: 7px;
		margin-right: 1px;
	}

	.monitor {
		display: flex;
		justify-content: space-between;
	}

	.monitor button {
		width: 17px;
		height: 13px;
		border: 1px solid #101114;
		background: #1a1b1f;
	}

	.monitor .pink {
		width: 27px;
	}

	.monitor button:last-child {
		width: 20px;
	}

	.mixer {
		display: flex;
		gap: 4px;
		padding: 2px 2px 0;
	}

	.mix-controls {
		display: flex;
		flex-direction: column;
		gap: 4px;
	}

	.mix-controls > div {
		display: flex;
		gap: 4px;
	}

	.mix-controls > .sends {
		gap: 3px;
	}

	:is(.mix-controls, .foot-controls) :is(button, input) {
		height: 13px;
		border: 1px solid #101114;
	}

	.mix-controls input,
	.foot-controls input {
		--fill: #008391;
		width: 46px;
		background: linear-gradient(90deg, #1e1f23 var(--from, 0%), var(--fill) var(--from, 0%) var(--to, 0%), #1e1f23 var(--to, 0%));
		text-align: center;
	}

	.mix-controls .sends input {
		width: 30px;
	}

	.mix-controls .cue {
		--fill: #416ec4;
	}

	.activator {
		width: 46px;
	}

	.solo {
		width: 21px;
		background: #1a1b1f;
	}

	.narrow {
		width: 17px;
	}

	.post {
		width: 25px;
	}

	.notch {
		stroke: #1a1b1f;
	}

	.pan {
		position: relative;
		display: flex;
	}

	.automated {
		position: absolute;
		top: -1px;
		left: 1px;
		width: 4px;
		height: 4px;
		border-radius: 50%;
		background: var(--pink);
	}

	.meter {
		display: flex;
		gap: 1px;
	}

	.meter i {
		width: 3px;
		background: #141518;
	}

	.drop {
		flex: 1;
		min-height: 43px;
		grid-template-columns: minmax(0, 1fr) 290px;
		margin-bottom: 1px;
	}

	.drop-hint {
		grid-area: 1 / 1 / 2 / -1;
		place-self: center;
	}

	.return {
		flex: none;
		height: 17px;
	}

	.return .mixer {
		padding-bottom: 2px;
	}

	.zoom-ratio {
		grid-area: 1 / 1 / 2 / -1;
		place-self: center end;
		padding-right: 3px;
		color: #77787d;
		font-size: 19px;
	}

	.foot-row {
		height: 21px;
		grid-template-columns: minmax(0, 1fr) 290px;
		gap: 0;
	}

	.foot-row > :first-child {
		border-radius: 0 0 0 4px;
	}

	.foot-row > :last-child {
		border-radius: 0 0 4px 0;
	}

	.time-ruler {
		display: flex;
		color: #a2a3a7;
	}

	.lead {
		flex: 310 0 0;
		min-width: 0;
	}

	.lead .locator {
		margin-left: 30%;
	}

	.time {
		display: flex;
		flex: 500 0 0;
		min-width: 0;
		padding-top: 1px;
		background:
			linear-gradient(#7b7c80, #7b7c80) 33% 0 / 1px 2px no-repeat,
			linear-gradient(#7b7c80, #7b7c80) 67% 0 / 1px 2px no-repeat;
		line-height: 14px;
	}

	.time i {
		width: 2px;
		height: 6px;
		border: solid #7b7c80;
		border-width: 0 0 1px 1px;
	}

	.tail {
		flex: 80 0 0;
	}

	.foot-controls {
		display: flex;
		gap: 3px;
		padding: 4px 2px;
	}

	.wave {
		width: 15px;
	}

	.foot-controls input {
		width: 35px;
	}

	.foot-controls .letter {
		width: 15px;
		background: #1a1b1f;
	}

	.foot-controls .h {
		margin-left: 3px;
	}

	/* Status bar */

	.statusbar {
		display: flex;
		height: 19px;
		padding: 7px 11px 9px 9px;
		align-items: center;
	}

	.info {
		width: 15px;
		height: 15px;
		margin-right: 16px;
		border-radius: 50%;
		background: #45464e;
		color: #242529;
		font-weight: 800;
		line-height: 15px;
		text-align: center;
	}

	.status-text {
		flex: 1;
		height: 19px;
		background: var(--panel);
		border-radius: 3px 0 0 3px;
	}

	.analysis {
		display: flex;
		align-items: center;
		justify-content: space-between;
		width: 256px;
		height: 19px;
		margin: 0 9px 0 2px;
		padding: 0 5px 0 6px;
		box-sizing: border-box;
		background: var(--panel);
		border-radius: 0 3px 3px 0;
	}

	.analysis button {
		width: 49px;
		height: 13px;
		border-radius: 7px;
		background: #17181b;
	}

	.clip-strip,
	.device-strip {
		display: flex;
		align-items: center;
		height: 19px;
		margin-right: 9px;
		background: var(--panel);
		border-radius: 3px;
	}

	:is(.clip-strip, .device-strip) button {
		width: 20px;
		height: 19px;
		border-right: 1px solid var(--edge);
	}

	.clip-map {
		width: 200px;
		height: 19px;
		stroke: none;
		fill: #16171a;
	}

	.clip-map .view {
		fill: #4a5259;
	}

	.device-strip span {
		width: 85px;
		padding-left: 6px;
		box-sizing: border-box;
		white-space: nowrap;
	}

	.device-strip {
		margin-right: 18px;
	}

	.device-strip rect {
		stroke: none;
	}

	.levels {
		margin-right: 6px;
		color: #4b4d55;
	}

	.levels-caret {
		color: #4b4d55;
	}

	.levels-caret path {
		fill: currentColor;
		stroke: none;
	}
</style>
